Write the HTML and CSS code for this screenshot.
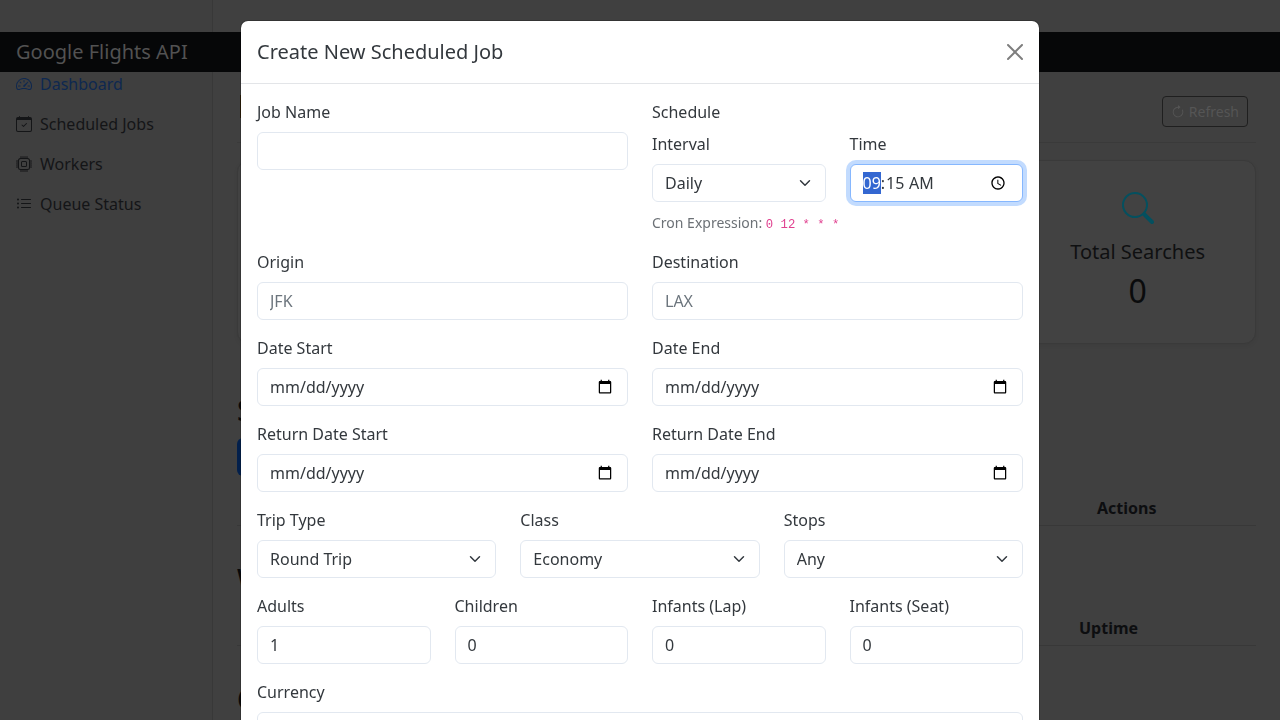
FILE: index.html
```html
<!DOCTYPE html>
<html lang="en">
<head>
<meta charset="utf-8">
<title>Google Flights API</title>
<link rel="stylesheet" href="styles.css">
</head>
<body>
<div class="app">
  <aside class="sidebar">
    <a class="side-link active" href="#"><svg class="ico" viewBox="0 0 16 16"><path d="M8 4a.5.5 0 0 1 .5.5V6a.5.5 0 0 1-1 0V4.500A.5.5 0 0 1 8 4zM3.732 5.732a.5.5 0 0 1 .707 0l.915.914a.5.5 0 1 1-.708.708l-.914-.915a.5.5 0 0 1 0-.707zM2 10a.5.5 0 0 1 .5-.5h1.586a.5.5 0 0 1 0 1H2.500A.5.5 0 0 1 2 10zm9.500 0a.5.5 0 0 1 .5-.5h1.500a.5.5 0 0 1 0 1H12a.5.5 0 0 1-.5-.5zm.754-4.246a.389.389 0 0 0-.527-.02L7.547 9.310a.91.91 0 1 0 1.302 1.258l3.434-4.297a.389.389 0 0 0-.029-.518z"/><path fill-rule="evenodd" d="M0 10a8 8 0 1 1 15.547 2.661c-.442 1.253-1.845 1.602-2.932 1.250C11.309 13.488 9.475 13 8 13c-1.474 0-3.310.488-4.615.911-1.087.352-2.490.003-2.932-1.250A7.988 7.988 0 0 1 0 10zm8-7a7 7 0 0 0-6.603 9.329c.203.575.923.876 1.680.630C4.397 12.533 6.358 12 8 12s3.604.532 4.923.960c.757.245 1.477-.056 1.680-.631A7 7 0 0 0 8 3z"/></svg>Dashboard</a>
    <a class="side-link" href="#"><svg class="ico" viewBox="0 0 16 16"><path d="M10.854 7.146a.5.5 0 0 1 0 .708l-3 3a.5.5 0 0 1-.708 0l-1.500-1.500a.5.5 0 1 1 .708-.708L7.500 9.793l2.646-2.647a.5.5 0 0 1 .708 0z"/><path d="M3.500 0a.5.5 0 0 1 .5.5V1h8V.5a.5.5 0 0 1 1 0V1h1a2 2 0 0 1 2 2v11a2 2 0 0 1-2 2H2a2 2 0 0 1-2-2V3a2 2 0 0 1 2-2h1V.5a.5.5 0 0 1 .5-.5zM1 4v10a1 1 0 0 0 1 1h12a1 1 0 0 0 1-1V4H1z"/></svg>Scheduled Jobs</a>
    <a class="side-link" href="#"><svg class="ico" viewBox="0 0 16 16"><path d="M5 0a.5.5 0 0 1 .5.5V2h1V.5a.5.5 0 0 1 1 0V2h1V.5a.5.5 0 0 1 1 0V2h1V.5a.5.5 0 0 1 1 0V2A2.500 2.500 0 0 1 14 4.500h1.500a.5.5 0 0 1 0 1H14v1h1.500a.5.5 0 0 1 0 1H14v1h1.500a.5.5 0 0 1 0 1H14v1h1.500a.5.5 0 0 1 0 1H14a2.500 2.500 0 0 1-2.500 2.500v1.500a.5.5 0 0 1-1 0V14h-1v1.500a.5.5 0 0 1-1 0V14h-1v1.500a.5.5 0 0 1-1 0V14h-1v1.500a.5.5 0 0 1-1 0V14A2.500 2.500 0 0 1 2 11.500H.5a.5.5 0 0 1 0-1H2v-1H.5a.5.5 0 0 1 0-1H2v-1H.5a.5.5 0 0 1 0-1H2v-1H.5a.5.5 0 0 1 0-1H2A2.500 2.500 0 0 1 4.500 2V.5A.5.5 0 0 1 5 0zm-.5 3A1.500 1.500 0 0 0 3 4.500v7A1.500 1.500 0 0 0 4.500 13h7a1.500 1.500 0 0 0 1.500-1.500v-7A1.500 1.500 0 0 0 11.500 3h-7zM5 6.500A1.500 1.500 0 0 1 6.500 5h3A1.500 1.500 0 0 1 11 6.500v3A1.500 1.500 0 0 1 9.500 11h-3A1.500 1.500 0 0 1 5 9.500v-3zM6.500 6a.5.5 0 0 0-.5.5v3a.5.5 0 0 0 .5.5h3a.5.5 0 0 0 .5-.5v-3a.5.5 0 0 0-.5-.5h-3z"/></svg>Workers</a>
    <a class="side-link" href="#"><svg class="ico" viewBox="0 0 16 16"><path fill-rule="evenodd" d="M5 11.500a.5.5 0 0 1 .5-.5h9a.5.5 0 0 1 0 1h-9a.5.5 0 0 1-.5-.5zm0-4a.5.5 0 0 1 .5-.5h9a.5.5 0 0 1 0 1h-9a.5.5 0 0 1-.5-.5zm0-4a.5.5 0 0 1 .5-.5h9a.5.5 0 0 1 0 1h-9a.5.5 0 0 1-.5-.5zm-3 1a1 1 0 1 0 0-2 1 1 0 0 0 0 2zm0 4a1 1 0 1 0 0-2 1 1 0 0 0 0 2zm0 4a1 1 0 1 0 0-2 1 1 0 0 0 0 2z"/></svg>Queue Status</a>
  </aside>

  <main class="main">
    <div class="page-head">
      <span class="head-accent"></span>
      <button class="btn-refresh" type="button"><svg class="ico-sm" viewBox="0 0 16 16"><path fill-rule="evenodd" d="M8 3a5 5 0 1 0 4.546 2.914.5.5 0 0 1 .908-.417A6 6 0 1 1 8 2v1z"/><path d="M8 4.466V.534a.25.25 0 0 1 .41-.192l2.360 1.966c.12.1.12.284 0 .384L8.410 4.658A.25.25 0 0 1 8 4.466z"/></svg>Refresh</button>
    </div>
    <div class="cards">
      <div class="card"></div>
      <div class="card"></div>
      <div class="card"></div>
      <div class="card">
        <svg class="ico-lg" viewBox="0 0 16 16"><path d="M11.742 10.344a6.500 6.500 0 1 0-1.397 1.398h-.001c.03.04.062.078.098.115l3.850 3.850a1 1 0 0 0 1.415-1.414l-3.850-3.850a1.007 1.007 0 0 0-.115-.1zM12 6.500a5.500 5.500 0 1 1-11 0 5.500 5.500 0 0 1 11 0z"/></svg>
        <div class="card-title">Total Searches</div>
        <div class="card-num">0</div>
      </div>
    </div>

    <h3 class="sec-title first">Scheduled Jobs</h3>
    <div class="btn-primary"></div>
    <table class="tbl">
      <tr><th></th><th class="col-actions">Actions</th></tr>
    </table>

    <h3 class="sec-title">Workers</h3>
    <table class="tbl">
      <tr><th></th><th class="col-uptime">Uptime</th></tr>
    </table>

    <h3 class="sec-title">Queue Status</h3>
  </main>

  <header class="navbar"><span class="brand">Google Flights API</span></header>
</div>

<div class="modal">
  <div class="modal-head">
    <h5 class="modal-title">Create New Scheduled Job</h5>
    <button class="close" type="button" aria-label="Close"><svg viewBox="0 0 16 16"><path d="M.293.293a1 1 0 0 1 1.414 0L8 6.586 14.293.293a1 1 0 1 1 1.414 1.414L9.414 8l6.293 6.293a1 1 0 0 1-1.414 1.414L8 9.414l-6.293 6.293a1 1 0 0 1-1.414-1.414L6.586 8 .293 1.707a1 1 0 0 1 0-1.414z"/></svg></button>
  </div>
  <form class="modal-body">
    <div class="row cols-2">
      <div class="field">
        <label class="label">Job Name</label>
        <input class="control" type="text">
      </div>
      <div class="field">
        <div class="label">Schedule</div>
        <div class="row cols-2">
          <div>
            <label class="label">Interval</label>
            <select class="control select"><option>Daily</option></select>
          </div>
          <div>
            <label class="label">Time</label>
            <input class="control" type="time" value="09:15" autofocus>
          </div>
        </div>
        <div class="cron"><small class="cron-label">Cron Expression: <code class="cron-code">0 12 * * *</code></small></div>
      </div>
    </div>
    <div class="row cols-2">
      <div class="field"><label class="label">Origin</label><input class="control" type="text" placeholder="JFK"></div>
      <div class="field"><label class="label">Destination</label><input class="control" type="text" placeholder="LAX"></div>
    </div>
    <div class="row cols-2">
      <div class="field"><label class="label">Date Start</label><input class="control" type="date"></div>
      <div class="field"><label class="label">Date End</label><input class="control" type="date"></div>
    </div>
    <div class="row cols-2">
      <div class="field"><label class="label">Return Date Start</label><input class="control" type="date"></div>
      <div class="field"><label class="label">Return Date End</label><input class="control" type="date"></div>
    </div>
    <div class="row cols-3">
      <div class="field"><label class="label">Trip Type</label><select class="control select"><option>Round Trip</option></select></div>
      <div class="field"><label class="label">Class</label><select class="control select"><option>Economy</option></select></div>
      <div class="field"><label class="label">Stops</label><select class="control select"><option>Any</option></select></div>
    </div>
    <div class="row cols-4">
      <div class="field"><label class="label">Adults</label><input class="control" type="text" value="1"></div>
      <div class="field"><label class="label">Children</label><input class="control" type="text" value="0"></div>
      <div class="field"><label class="label">Infants (Lap)</label><input class="control" type="text" value="0"></div>
      <div class="field"><label class="label">Infants (Seat)</label><input class="control" type="text" value="0"></div>
    </div>
    <div class="field"><label class="label">Currency</label><input class="control" type="text"></div>
  </form>
</div>
</body>
</html>
```

FILE: styles.css
```css
* { box-sizing: border-box; }
html, body { margin: 0; height: 720px; overflow: hidden; }
body {
  background: #404040;
  font-family: "Noto Sans", sans-serif;
  font-size: 16px;
  line-height: 1.5;
  color: #33383d;
}

.app { display: flex; height: 720px; overflow: hidden; }

.sidebar {
  flex: 0 0 213px;
  padding-top: 64px;
  border-right: 1px solid #383838;
  background: #3f3f3f;
}
.side-link {
  display: flex;
  align-items: center;
  gap: 8px;
  height: 40px;
  padding: 0 16px;
  color: #141517;
  text-decoration: none;
}
.side-link.active { color: #0e2850; }
.ico { width: 16px; height: 16px; fill: currentColor; flex: none; }

.navbar {
  position: absolute;
  top: 32px;
  left: 0;
  right: 0;
  height: 40px;
  display: flex;
  align-items: center;
  padding: 0 16px;
  background: #060708;
}
.brand { font-size: 20px; line-height: 30px; color: #525252; }

.main { flex: 1; min-width: 0; padding: 96px 24px 0; }

.page-head {
  display: flex;
  justify-content: space-between;
  height: 47px;
  margin-bottom: 17px;
  border-bottom: 1px solid #3a3a3a;
  padding-right: 8px;
}
.head-accent { width: 1px; height: 23px; margin: -1px 0 0 3px; background: #2a1c08; }
.btn-refresh {
  display: flex;
  align-items: center;
  gap: 4px;
  height: 31px;
  padding: 0 8px;
  border: 1px solid #1f1f1f;
  border-radius: 4px;
  background: transparent;
  color: #555;
  font: 14px/21px "Noto Sans", sans-serif;
}
.ico-sm { width: 14px; height: 14px; fill: currentColor; }

.cards { display: grid; grid-template-columns: repeat(4, 1fr); gap: 24px; }
.card {
  height: 184px;
  padding-top: 31px;
  display: flex;
  flex-direction: column;
  align-items: center;
  border: 1px solid #3a3a3a;
  border-radius: 12px;
  background: #424242;
  box-shadow: 0 2px 4px rgba(0, 0, 0, .06);
}
.ico-lg { width: 32px; height: 32px; margin-bottom: 16px; fill: #04505f; }
.card-title { font-size: 20px; line-height: 24px; margin-bottom: 8px; color: #0f1011; white-space: nowrap; }
.card-num { font-size: 32px; line-height: 38px; color: #0a0b0c; }

.sec-title {
  margin: 36px 0 16px;
  white-space: nowrap;
  font-size: 28px;
  font-weight: 500;
  line-height: 34px;
  color: #08090a;
}
.sec-title.first { margin: 49px 0 11px; }
.btn-primary { width: 120px; height: 38px; margin-bottom: 15px; border-radius: 6px; background: #03204c; }

.tbl { width: 100%; border-collapse: collapse; table-layout: fixed; }
.tbl th {
  height: 34px;
  padding: 0 8px;
  text-align: left;
  font-weight: 700;
  border-bottom: 1px solid #383838;
  color: #0d0e10;
}
.col-actions { width: 167px; }
.col-uptime { width: 185px; }

.modal {
  position: fixed;
  top: 20px;
  left: 240px;
  width: 800px;
  height: 760px;
  overflow: hidden;
  border: 1px solid rgba(0, 0, 0, .175);
  border-radius: 8px;
  background: #fff;
  background-clip: padding-box;
}
.modal-head {
  display: flex;
  align-items: center;
  justify-content: space-between;
  height: 63px;
  padding: 0 16px;
  border-bottom: 1px solid #e3e5e8;
}
.modal-title { margin: 0; font-size: 20px; font-weight: 400; line-height: 30px; }
.close { width: 16px; height: 16px; padding: 0; border: 0; background: none; opacity: .5; display: block; }
.close svg { display: block; width: 16px; height: 16px; fill: #000; }

.modal-body { padding: 16px; }
.row { display: grid; column-gap: 24px; }
.cols-2 { grid-template-columns: repeat(2, 1fr); }
.cols-3 { grid-template-columns: repeat(3, 1fr); }
.cols-4 { grid-template-columns: repeat(4, 1fr); }
.field { margin-bottom: 16px; }
.label { display: block; margin-bottom: 8px; line-height: 24px; }

.control {
  display: block;
  width: 100%;
  height: 38px;
  padding: 6px 12px;
  border: 1px solid #e2e8f0;
  border-radius: 6px;
  background-color: #fff;
  color: #33383d;
  font: 16px/24px "Noto Sans", sans-serif;
  outline: 0;
}
.control::placeholder { color: #6c757d; opacity: 1; }
.control:focus { border-color: #86b7fe; box-shadow: 0 0 0 4px rgba(13, 110, 253, .25); }
.control::-webkit-datetime-edit,
.control::-webkit-datetime-edit-fields-wrapper,
.control::-webkit-datetime-edit-text,
.control::-webkit-datetime-edit-hour-field,
.control::-webkit-datetime-edit-day-field,
.control::-webkit-datetime-edit-month-field,
.control::-webkit-datetime-edit-year-field { padding: 0; }
.select {
  appearance: none;
  padding-right: 36px;
  background-image: url("data:image/svg+xml,%3csvg xmlns='http://www.w3.org/2000/svg' viewBox='0 0 16 16'%3e%3cpath fill='none' stroke='%23343a40' stroke-linecap='round' stroke-linejoin='round' stroke-width='2' d='m2 5 6 6 6-6'/%3e%3c/svg%3e");
  background-repeat: no-repeat;
  background-position: right 12px center;
  background-size: 16px 12px;
}
.cron { height: 24px; margin-top: 8px; line-height: 24px; }
.cron-label { font-size: 14px; color: #6c7176; }
.cron-code { font-family: "Liberation Mono", monospace; font-size: 12.25px; color: #e0408f; }
```
